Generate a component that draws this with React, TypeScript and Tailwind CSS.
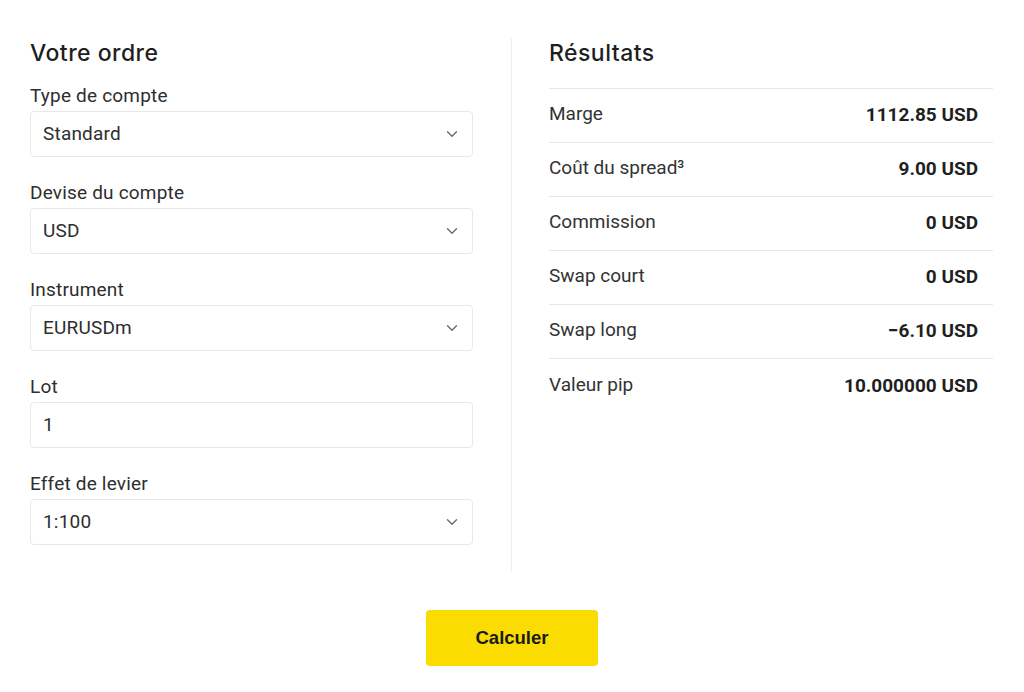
import React from "react";

const Chevron = () => (
  <svg width="12" height="8" viewBox="0 0 12 8" fill="none" className="shrink-0">
    <path d="M1.5 1.75L6 6.25L10.5 1.75" stroke="#6b6b6b" strokeWidth="1.4" strokeLinecap="round" strokeLinejoin="round" />
  </svg>
);

const Field = ({ label, value, select = true }: { label: string; value: string; select?: boolean }) => (
  <div className="flex flex-col">
    <div className="h-[24px] leading-[24px] text-[19px] tracking-[0.01em] text-[#2e2e2e]">{label}</div>
    <div className="mt-[3px] h-[46px] rounded-[4px] border border-[#e8e8e8] flex items-center justify-between pl-[12px] pr-[14px] text-[19px] tracking-[0.01em] text-[#2e2e2e] bg-white">
      <span>{value}</span>
      {select && <Chevron />}
    </div>
  </div>
);

const rows: [string, React.ReactNode, string][] = [
  ["Marge", "Marge", "1112.85 USD"],
  ["Cout", <>Coût du spread³</>, "9.00 USD"],
  ["Commission", "Commission", "0 USD"],
  ["Swap court", "Swap court", "0 USD"],
  ["Swap long", "Swap long", "−6.10 USD"],
  ["Valeur pip", "Valeur pip", "10.000000 USD"],
];

export default function App() {
  return (
    <div className="w-[1024px] h-[692px] bg-white font-['Roboto',sans-serif] text-[#2b2b2b]">
      <div className="flex pl-[30px] pr-[31px] pt-[38px]">
        <div className="w-[443px] flex flex-col pb-[27px]">
          <h2 className="h-[30px] leading-[30px] text-[23px] tracking-[0.02em] font-medium font-['Inter',sans-serif] text-[#1f1f1f]">Votre ordre</h2>
          <div className="mt-[16px] flex flex-col gap-[24px]">
            <Field label="Type de compte" value="Standard" />
            <Field label="Devise du compte" value="USD" />
            <Field label="Instrument" value="EURUSDm" />
            <Field label="Lot" value="1" select={false} />
            <Field label="Effet de levier" value="1:100" />
          </div>
        </div>
        <div className="ml-[38px] mr-[37px] w-px bg-[#efefef]" />
        <div className="flex-1 flex flex-col">
          <h2 className="h-[30px] leading-[30px] text-[23px] tracking-[0.02em] font-medium font-['Inter',sans-serif] text-[#1f1f1f]">Résultats</h2>
          <div className="mt-[20px] border-t border-[#e6e6e6]">
            {rows.map(([k, label, value], i) => (
              <div
                key={k}
                className={`h-[54px] flex items-center justify-between pr-[15px] ${i < rows.length - 1 ? "border-b border-[#e6e6e6]" : ""}`}
              >
                <span className="text-[19px] text-[#333333] -mt-[2px]">{label}</span>
                <span className="text-[19px] font-bold text-[#1f1f1f]">{value}</span>
              </div>
            ))}
          </div>
        </div>
      </div>
      <div className="flex justify-center mt-[38px]">
        <button className="w-[172px] h-[56px] rounded-[4px] bg-[#fadc00] text-[18.5px] font-bold text-[#1a1a1a] font-['Liberation_Sans',sans-serif]">
          Calculer
        </button>
      </div>
    </div>
  );
}
